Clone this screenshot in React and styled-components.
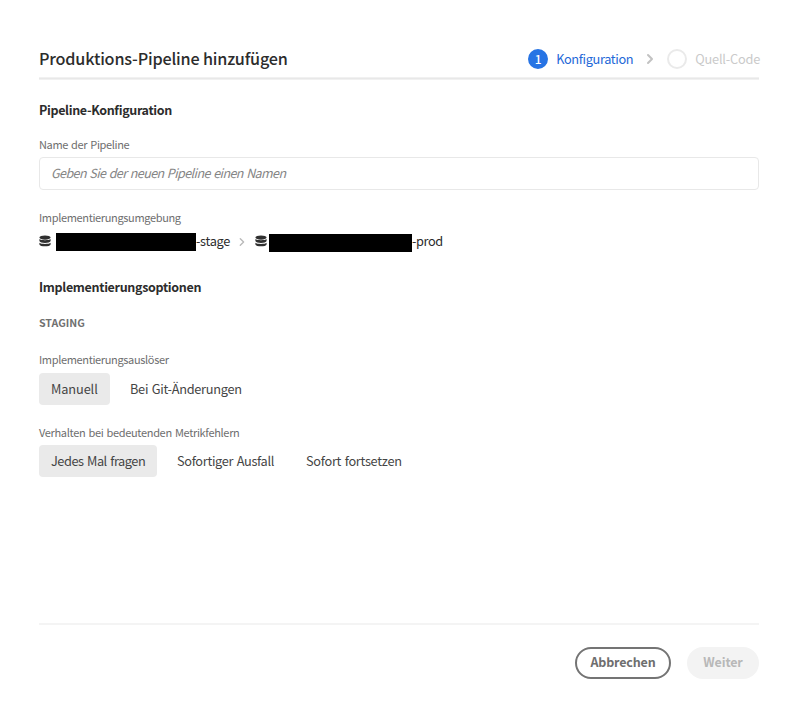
import React from 'react';
import styled, { createGlobalStyle } from 'styled-components';

const GlobalStyle = createGlobalStyle`
  * { box-sizing: border-box; }
  body {
    margin: 0;
    background: #fff;
    color: #2c2c2c;
    font-family: "Noto Sans CJK SC", "Noto Sans", sans-serif;
    font-size: 12.75px;
  }
`;

const tracking = ({ $track = 0 }) => `letter-spacing: ${$track}px; word-spacing: 1px;`;

const Dialog = styled.main`
  display: flex;
  flex-direction: column;
  width: 797px;
  height: 709px;
  padding: 38px 38px 30px 39px;
  white-space: nowrap;
`;

const Header = styled.header`
  display: flex;
  align-items: center;
  justify-content: space-between;
  height: 39px;
`;

const Title = styled.h1`
  margin: 0;
  font-size: 16.2px;
  font-weight: 500;
  line-height: 40px;
  letter-spacing: -0.18px;
`;

const HeaderRule = styled.div`
  flex: none;
  height: 3px;
  background: linear-gradient(#f1f1f1 1px, #e8e8e8 1px 2px, #f1f1f1 2px);
`;

const Steps = styled.nav`
  display: flex;
  align-items: center;
  height: 42px;
  padding-top: 2px;
  margin-right: -1px;
`;

const StepMarker = styled.span`
  display: flex;
  align-items: center;
  justify-content: center;
  width: 20px;
  height: 20px;
  margin-right: 8px;
  border: 2px solid ${({ $active }) => ($active ? '#2774e4' : '#eaeaea')};
  border-radius: 50%;
  background: ${({ $active }) => ($active ? '#2774e4' : '#fff')};
  color: #fff;
  font-size: 12px;
  font-weight: 500;
  line-height: 16px;
`;

const StepLabel = styled.span`
  line-height: 20px;
  color: ${({ $active }) => ($active ? '#2368d8' : '#cacaca')};
  ${tracking}
`;

const Chevron = styled.svg`
  display: block;
  fill: none;
  stroke: ${({ $tone }) => $tone};
  stroke-linecap: round;
  stroke-linejoin: round;
`;

const StepArrow = styled.span`
  margin: 0 13px 0 13px;
`;

const SectionTitle = styled.h2`
  margin: ${({ $top }) => $top}px 0 0;
  font-size: 12.5px;
  font-weight: 700;
  line-height: 20px;
  ${tracking}
`;

const GroupTitle = styled.h3`
  margin: 16px 0 0;
  font-size: 10.6px;
  font-weight: 700;
  line-height: 20px;
  color: #707070;
`;

const FieldLabel = styled.label`
  display: block;
  margin-top: ${({ $top }) => $top}px;
  font-size: 11px;
  line-height: 16px;
  color: #6e6e6e;
  ${tracking}
`;

const NameInput = styled.input`
  flex: none;
  width: 720px;
  height: 33px;
  margin-top: 5px;
  padding: 0 11px 2px;
  border: 1px solid #e8e8e8;
  border-radius: 4px;
  outline: none;
  background: #fff;
  font: italic 12.5px "Noto Sans CJK SC", sans-serif;
  letter-spacing: -0.56px;
  word-spacing: 1px;
  &::placeholder { color: #858585; opacity: 1; }
`;

const Environments = styled.div`
  display: flex;
  align-items: center;
  height: 20px;
  margin-top: 6px;
`;

const DatabaseIcon = styled.svg`
  display: block;
  flex: none;
  margin: 0 ${({ $gap }) => $gap}px 1px 0;
`;

const Redaction = styled.span`
  width: ${({ $width }) => $width}px;
  height: 18px;
  background: #000;
  transform: translateY(${({ $drop }) => $drop}px);
`;

const EnvironmentName = styled.span`
  width: ${({ $width }) => $width}px;
  line-height: 20px;
  ${tracking}
`;

const EnvironmentArrow = styled.span`
  margin: 1px 9px 0 9px;
`;

const Options = styled.div`
  display: flex;
  flex: none;
  gap: 8px;
  margin-top: ${({ $top }) => $top}px;
`;

const Option = styled.button`
  width: ${({ $width }) => $width}px;
  height: 32px;
  padding: 0 0 1px 12px;
  border: 0;
  border-radius: 4px;
  background: ${({ $selected }) => ($selected ? '#eaeaea' : 'transparent')};
  color: #454545;
  font: 12.75px/31px "Noto Sans CJK SC", sans-serif;
  text-align: left;
  ${tracking}
`;

const Footer = styled.footer`
  display: flex;
  justify-content: flex-end;
  gap: 16px;
  margin-top: auto;
  height: 56px;
  padding-top: 22px;
  border-top: 2px solid #f4f4f4;
`;

const ActionButton = styled.button`
  width: ${({ $width }) => $width}px;
  height: 32px;
  padding: 0 0 2px;
  border: 2px solid ${({ $disabled }) => ($disabled ? '#f3f3f3' : '#747474')};
  border-radius: 16px;
  background: ${({ $disabled }) => ($disabled ? '#f3f3f3' : '#fff')};
  color: ${({ $disabled }) => ($disabled ? '#b8b8b8' : '#6e6e6e')};
  font: 700 12.5px/26px "Noto Sans CJK SC", sans-serif;
  letter-spacing: -0.15px;
`;

function Database({ gap }) {
  return (
    <DatabaseIcon $gap={gap} width="12" height="12" viewBox="0 0 12 12" fill="#303030">
      <ellipse cx="6" cy="2.6" rx="5.6" ry="2.1" />
      <path d="M.4 4.1C1.8 5.7 10.2 5.7 11.6 4.1V6.1C11.2 8.6 .8 8.6 .4 6.1Z" />
      <path d="M.4 7.7C1.8 9.3 10.2 9.3 11.6 7.7V9.4C11.2 12 .8 12 .4 9.4Z" />
    </DatabaseIcon>
  );
}

const environments = [
  { suffix: '-stage', hidden: 140, gap: 5, drop: 1, width: 33, track: -0.3 },
  { suffix: '-prod', hidden: 143, gap: 2, drop: 2, width: 32, track: -0.4 },
];

const triggers = [
  { text: 'Manuell', width: 71, track: -0.1, selected: true },
  { text: 'Bei Git-Änderungen', width: 136, track: -0.28 },
];

const failureBehaviours = [
  { text: 'Jedes Mal fragen', width: 118, track: -0.45, selected: true },
  { text: 'Sofortiger Ausfall', width: 121, track: -0.32 },
  { text: 'Sofort fortsetzen', width: 120, track: -0.28 },
];

function OptionGroup({ items, top }) {
  return (
    <Options $top={top}>
      {items.map((item) => (
        <Option key={item.text} $width={item.width} $track={item.track} $selected={item.selected}>
          {item.text}
        </Option>
      ))}
    </Options>
  );
}

export default function App() {
  return (
    <>
      <GlobalStyle />
      <Dialog>
        <Header>
          <Title>Produktions-Pipeline hinzufügen</Title>
          <Steps>
            <StepMarker $active>1</StepMarker>
            <StepLabel $active $track={-0.35}>Konfiguration</StepLabel>
            <StepArrow>
              <Chevron $tone="#c2c2c2" width="8" height="12" viewBox="0 0 8 12" strokeWidth="2">
                <path d="M2 2L6 6L2 10" />
              </Chevron>
            </StepArrow>
            <StepMarker />
            <StepLabel $track={-0.2}>Quell-Code</StepLabel>
          </Steps>
        </Header>
        <HeaderRule />

        <SectionTitle $top={20} $track={-0.34}>Pipeline-Konfiguration</SectionTitle>
        <FieldLabel $top={16} $track={-0.36} htmlFor="pipeline-name">Name der Pipeline</FieldLabel>
        <NameInput id="pipeline-name" placeholder="Geben Sie der neuen Pipeline einen Namen" />

        <FieldLabel as="div" $top={19} $track={-0.35}>Implementierungsumgebung</FieldLabel>
        <Environments>
          {environments.map((env, index) => (
            <React.Fragment key={env.suffix}>
              {index > 0 && (
                <EnvironmentArrow>
                  <Chevron $tone="#bababa" width="8" height="10" viewBox="0 0 8 10" strokeWidth="1.4">
                    <path d="M2.3 1.7L5.6 5L2.3 8.3" />
                  </Chevron>
                </EnvironmentArrow>
              )}
              <Database gap={env.gap} />
              <Redaction $width={env.hidden} $drop={env.drop} />
              <EnvironmentName $width={env.width} $track={env.track}>{env.suffix}</EnvironmentName>
            </React.Fragment>
          ))}
        </Environments>

        <SectionTitle $top={26} $track={-0.32}>Implementierungsoptionen</SectionTitle>
        <GroupTitle>STAGING</GroupTitle>
        <FieldLabel as="div" $top={18} $track={-0.35}>Implementierungsauslöser</FieldLabel>
        <OptionGroup items={triggers} top={6} />
        <FieldLabel as="div" $top={19} $track={-0.33}>Verhalten bei bedeutenden Metrikfehlern</FieldLabel>
        <OptionGroup items={failureBehaviours} top={5} />

        <Footer>
          <ActionButton $width={96}>Abbrechen</ActionButton>
          <ActionButton $width={72} $disabled disabled>Weiter</ActionButton>
        </Footer>
      </Dialog>
    </>
  );
}
